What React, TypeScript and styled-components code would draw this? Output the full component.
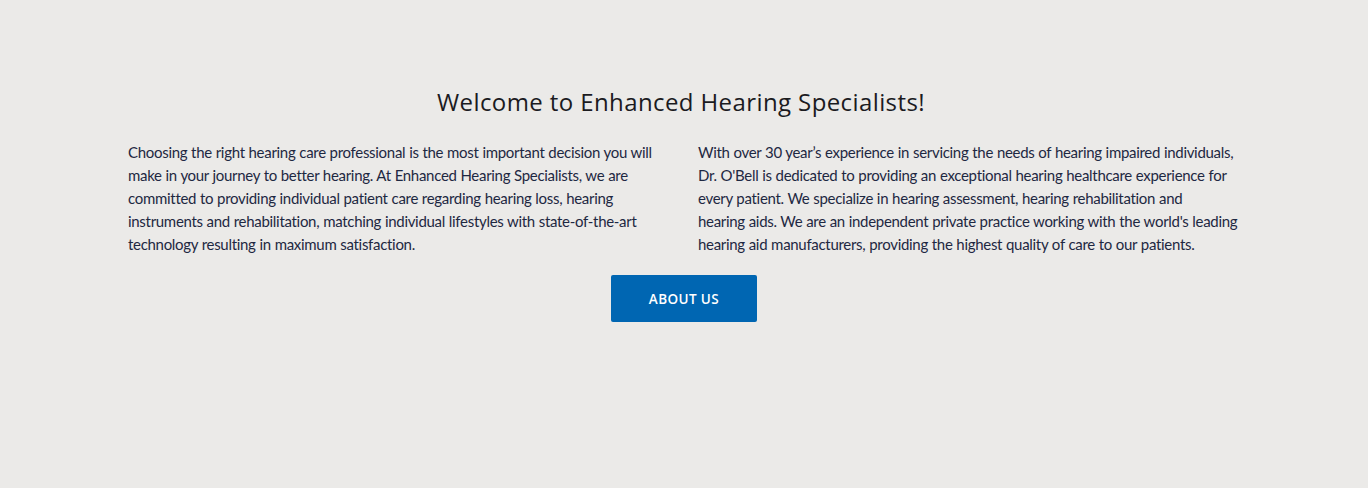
import React from "react";
import styled, { createGlobalStyle } from "styled-components";

const Global = createGlobalStyle`
  html, body { margin: 0; padding: 0; background: #ebeae8; }
  body { font-family: "Lato", "Liberation Sans", sans-serif; }
`;

const Section = styled.section`
  background: #ebeae8;
  height: 488px;
  box-sizing: border-box;
  padding-top: 88px;
`;

const Container = styled.div`
  width: 1140px;
  margin: 0 auto;
  padding: 0 15px;
  box-sizing: border-box;
`;

const Title = styled.h2`
  margin: 0 0 25px;
  padding-right: 6px;
  text-align: center;
  font-family: "Open Sans", "Liberation Sans", sans-serif;
  font-weight: 400;
  font-size: 24px;
  letter-spacing: 0.4px;
  line-height: 28px;
  color: #1b1b1f;
`;

const Columns = styled.div`
  display: grid;
  grid-template-columns: 1fr 1fr;
  column-gap: 30px;
`;

const Para = styled.p`
  margin: 0 0 0 -1px;
  font-family: "Lato", "Liberation Sans", sans-serif;
  font-size: 15px;
  letter-spacing: -0.3px;
  word-spacing: 0.3px;
  line-height: 23px;
  color: #1e2842;
  white-space: nowrap;
`;

const ButtonRow = styled.div`
  display: flex;
  justify-content: center;
  margin-top: 19px;
`;

const Button = styled.a`
  display: flex;
  align-items: center;
  justify-content: center;
  width: 146px;
  height: 47px;
  background: #0066b2;
  border-radius: 2px;
  color: #fff;
  font-family: "Open Sans", "Liberation Sans", sans-serif;
  font-weight: 600;
  font-size: 13.5px;
  text-decoration: none;
  letter-spacing: 0.4px;
`;

export default function App() {
  return (
    <>
      <Global />
      <Section>
        <Container>
          <Title>Welcome to Enhanced Hearing Specialists!</Title>
          <Columns>
            <Para>
              Choosing the right hearing care professional is the most important decision you will<br />
              make in your journey to better hearing. At Enhanced Hearing Specialists, we are<br />
              committed to providing individual patient care regarding hearing loss, hearing<br />
              instruments and rehabilitation, matching individual lifestyles with state-of-the-art<br />
              technology resulting in maximum satisfaction.
            </Para>
            <Para>
              With over 30 year’s experience in servicing the needs of hearing impaired individuals,<br />
              Dr. O'Bell is dedicated to providing an exceptional hearing healthcare experience for<br />
              every patient. We specialize in hearing assessment, hearing rehabilitation and<br />
              hearing aids. We are an independent private practice working with the world's leading<br />
              hearing aid manufacturers, providing the highest quality of care to our patients.
            </Para>
          </Columns>
          <ButtonRow>
            <Button href="#">ABOUT US</Button>
          </ButtonRow>
        </Container>
      </Section>
    </>
  );
}
